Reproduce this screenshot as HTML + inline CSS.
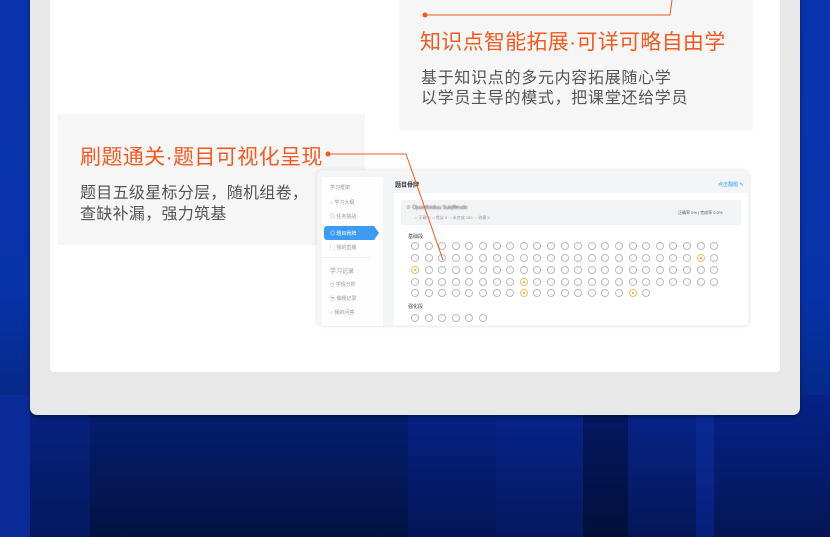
<!DOCTYPE html>
<html><head><meta charset="utf-8"><style>
*{margin:0;padding:0;box-sizing:border-box}
body{width:830px;height:537px;overflow:hidden;position:relative;font-family:"Liberation Sans","Noto Sans CJK SC",sans-serif;background:linear-gradient(180deg,#0a34ae 0%,#0733a8 55%,#062a8c 72%,#05195a 100%)}
.a{position:absolute}
.stripe{position:absolute;top:395px;bottom:0}
.dot{position:absolute;width:8px;height:8px;border:1px solid #bbb;border-radius:50%;background:#fff}
.dot.y::after{content:"";position:absolute;left:2px;top:2px;width:2px;height:2px;background:#f5a300;border-radius:50%}
.dot.y{border-color:#e8c060}
.side{font-size:5px;color:#999}
</style></head><body>
<div class="stripe" style="left:0;width:830px;background:linear-gradient(180deg,#06258a,#04154f)"></div>
<div class="stripe" style="left:0;width:30px;background:#0a2a98"></div>
<div class="stripe" style="left:30px;width:60px;background:linear-gradient(180deg,#062284,#05195e)"></div>
<div class="stripe" style="left:90px;width:320px;background:linear-gradient(180deg,#052076,#031244)"></div>
<div class="stripe" style="left:408px;width:88px;background:linear-gradient(180deg,#06228a,#041656)"></div>
<div class="stripe" style="left:496px;width:87px;background:linear-gradient(180deg,#072690,#05195e)"></div>
<div class="stripe" style="left:583px;width:45px;background:linear-gradient(180deg,#041a68,#020f3a)"></div>
<div class="stripe" style="left:628px;width:68px;background:linear-gradient(180deg,#072690,#041656)"></div>
<div class="stripe" style="left:696px;width:18px;background:linear-gradient(180deg,#0a2d9c,#06207a)"></div>
<div class="stripe" style="left:714px;width:116px;background:linear-gradient(180deg,#06228a,#041654)"></div>
<div class="a" style="left:30px;top:-10px;width:770px;height:425px;background:#e8e8e8;border-radius:7px;box-shadow:0 2px 4px rgba(0,0,0,.4)"></div>
<div class="a" style="left:50px;top:-10px;width:730px;height:382px;background:#fff;border-radius:4px"></div>
<div class="a" style="left:399px;top:0;width:354px;height:130px;background:#f6f6f6"></div>
<div class="a" style="left:58px;top:114px;width:307px;height:131px;background:#f6f6f6"></div>
<div class="a" style="left:420px;top:26px;font-size:21px;letter-spacing:0.3px;color:#f15a22;white-space:nowrap">知识点智能拓展·可详可略自由学</div>
<div class="a" style="left:421px;top:69px;font-size:16px;letter-spacing:0.7px;color:#555;line-height:20px;white-space:nowrap">基于知识点的多元内容拓展随心学<br>以学员主导的模式，把课堂还给学员</div>
<div class="a" style="left:80px;top:141px;font-size:21px;letter-spacing:0.4px;color:#f15a22;white-space:nowrap">刷题通关·题目可视化呈现</div>
<div class="a" style="left:80px;top:183px;font-size:16px;letter-spacing:0.3px;color:#555;line-height:21px;white-space:nowrap">题目五级星标分层，随机组卷，<br>查缺补漏，强力筑基</div>
<!-- screenshot -->
<div class="a" style="left:317px;top:170px;width:432px;height:156px;background:#f4f5f7;border-radius:6px;box-shadow:0 0 4px rgba(0,0,0,.12)"></div>
<div class="a" style="left:322px;top:177px;width:61px;height:149px;background:#fff;opacity:.85"></div>
<div class="a side" style="left:330px;top:184px">学习框架</div>
<div class="a side" style="left:330px;top:199px">○ 学习大纲</div>
<div class="a side" style="left:330px;top:213px">◎ 任务挑战</div>
<div class="a" style="left:324px;top:226px;width:50px;height:14px;background:#3d9bf2;border-radius:3px 0 0 3px;font-size:5px;color:#fff;padding:4px 0 0 6px">◎ 题目骨牌</div>
<div class="a" style="left:374px;top:226px;width:0;height:0;border-top:7px solid transparent;border-bottom:7px solid transparent;border-left:5px solid #3d9bf2"></div>
<div class="a side" style="left:330px;top:244px">▢ 我的直播</div>
<div class="a" style="left:322px;top:257px;width:48px;height:1px;background:#eee"></div>
<div class="a side" style="left:330px;top:266px;font-size:6px">学习记录</div>
<div class="a side" style="left:330px;top:281px">◷ 学情分析</div>
<div class="a side" style="left:330px;top:295px">▣ 做题记录</div>
<div class="a side" style="left:330px;top:309px">○ 我的问答</div>
<div class="a" style="left:395px;top:180px;font-size:6px;font-weight:bold;color:#333">题目骨牌</div>
<div class="a" style="left:718px;top:181px;font-size:5px;color:#3d9bf2">点击翻题 ✎</div>
<div class="a" style="left:394px;top:193px;width:354px;height:132px;background:#fff"></div>
<div class="a" style="left:401px;top:200px;width:340px;height:25px;background:#f2f3f5;border-radius:2px"></div>
<div class="a" style="left:406px;top:204px;font-size:5px;color:#999">⊗ <span style="color:#444;filter:blur(.6px)">Ojuselfoidiuu Suiqflleudo</span></div>
<div class="a" style="left:415px;top:215px;font-size:4px;color:#999;white-space:nowrap"><span style="color:#5c5">○</span> 正确 0 &nbsp;<span style="color:#e55">○</span> 错误 0 &nbsp;○ 未完成 150 &nbsp;<span style="color:#eb0">○</span> 收藏 5</div>
<div class="a" style="left:678px;top:210px;font-size:4px;color:#555">正确率 0% | 完成率 0.0%</div>
<div class="a" style="left:408px;top:233px;font-size:5px;color:#444">基础段</div>
<div class="a" style="left:408px;top:303px;font-size:5px;color:#444">强化段</div>
<div id="g"></div>
<script>
var h='',ys=[246,258,270,282,293],hl={'1,21':1,'2,0':1,'3,8':1,'4,8':1,'4,16':1};
for(var r=0;r<5;r++){var n=r==4?18:23;for(var c=0;c<n;c++){h+='<div class="dot'+(hl[r+','+c]?' y':'')+'" style="left:'+(411+c*13.6)+'px;top:'+(ys[r]-4)+'px"></div>';}}
for(var c=0;c<6;c++)h+='<div class="dot" style="left:'+(411+c*13.6)+'px;top:314px"></div>';
document.getElementById('g').innerHTML=h;
</script>
<svg class="a" style="left:0;top:0" width="830" height="537">
<polyline points="425,15 670,15 672,0" fill="none" stroke="#f15a22" stroke-width="1"/>
<circle cx="425" cy="15" r="2.5" fill="#f15a22"/>
<polyline points="328,154 406,154 443,260" fill="none" stroke="#f15a22" stroke-width="1"/>
<circle cx="328" cy="154" r="2.5" fill="#f15a22"/>
</svg>
</body></html>
